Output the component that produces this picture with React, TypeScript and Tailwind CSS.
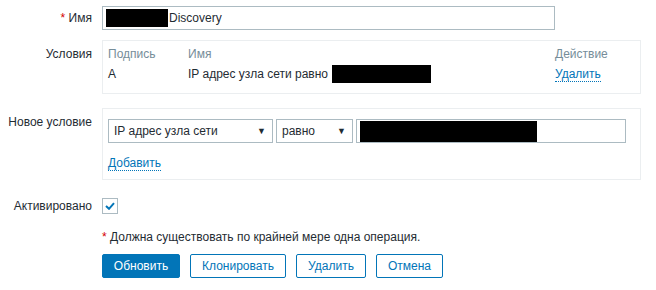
export default function App() {
  const label = 'w-[92px] shrink-0 text-right text-[12px] text-[#1f2c33]'
  const link = 'text-[#0275b8] border-b border-dotted border-[#0275b8] leading-[14px]'

  return (
    <div className="w-[656px] h-[290px] bg-white pt-[6px] text-[12px] text-[#1f2c33]" style={{ fontFamily: '"Liberation Sans", Arial, sans-serif' }}>
      {/* Имя */}
      <div className="flex items-center gap-[10px]">
        <div className={label}><span className="text-[#d40000]">*</span> Имя</div>
        <div className="w-[453px] h-[24px] border border-[#acbbc2] flex items-center pl-[3px]">
          <span className="w-[62px] h-[18px] bg-black" />
          <span className="ml-px">Discovery</span>
        </div>
      </div>

      {/* Условия */}
      <div className="flex gap-[10px] mt-[10px]">
        <div className={label + ' pt-[5px]'}>Условия</div>
        <div className="w-[539px] h-[54px] border border-[#ebeef0] px-[5px] pt-[3px]">
          <div className="grid grid-cols-[80px_1fr_80px] h-[20px] items-center text-[#768d99]">
            <span>Подпись</span>
            <span>Имя</span>
            <span>Действие</span>
          </div>
          <div className="grid grid-cols-[80px_1fr_80px] h-[20px] items-center">
            <span>A</span>
            <span className="flex items-center">
              IP адрес узла сети равно
              <span className="ml-[4px] w-[99px] h-[18px] bg-black" />
            </span>
            <span><span className={link}>Удалить</span></span>
          </div>
        </div>
      </div>

      {/* Новое условие */}
      <div className="flex gap-[10px] mt-[14px]">
        <div className={label + ' pt-[5px]'}>Новое условие</div>
        <div className="w-[539px] h-[72px] border border-[#ebeef0] px-[5px] pt-[10px]">
          <div className="flex gap-[3px]">
            <div className="w-[165px] h-[24px] border border-[#acbbc2] flex items-center justify-between pl-[5px] pr-[6px]">
              <span>IP адрес узла сети</span>
              <span className="text-[9px] leading-none">▼</span>
            </div>
            <div className="w-[77px] h-[24px] border border-[#acbbc2] flex items-center justify-between pl-[5px] pr-[6px]">
              <span>равно</span>
              <span className="text-[9px] leading-none">▼</span>
            </div>
            <div className="w-[270px] h-[24px] border border-[#acbbc2] flex items-center pl-[3px]">
              <span className="w-[177px] h-[21px] bg-black" />
            </div>
          </div>
          <div className="mt-[11px]">
            <span className={link}>Добавить</span>
          </div>
        </div>
      </div>

      {/* Активировано */}
      <div className="flex items-center gap-[10px] mt-[17px]">
        <div className={label}>Активировано</div>
        <div className="w-[16px] h-[16px] border border-[#acbbc2] flex items-center justify-center">
          <svg width="10" height="8" viewBox="0 0 10 8">
            <path d="M1 4 L4 6.8 L9 1.2" fill="none" stroke="#0275b8" strokeWidth="2" />
          </svg>
        </div>
      </div>

      <div className="ml-[102px] mt-[15px] leading-[14px]">
        <span className="text-[#d40000]">*</span> Должна существовать по крайней мере одна операция.
      </div>

      <div className="ml-[102px] mt-[10px] flex gap-[10px]">
        <button className="h-[24px] w-[78px] rounded-[2px] bg-[#0275b8] border border-[#0275b8] text-white">Обновить</button>
        <button className="h-[24px] w-[96px] rounded-[2px] bg-white border border-[#0275b8] text-[#0275b8]">Клонировать</button>
        <button className="h-[24px] w-[70px] rounded-[2px] bg-white border border-[#0275b8] text-[#0275b8]">Удалить</button>
        <button className="h-[24px] w-[67px] rounded-[2px] bg-white border border-[#0275b8] text-[#0275b8]">Отмена</button>
      </div>
    </div>
  )
}
